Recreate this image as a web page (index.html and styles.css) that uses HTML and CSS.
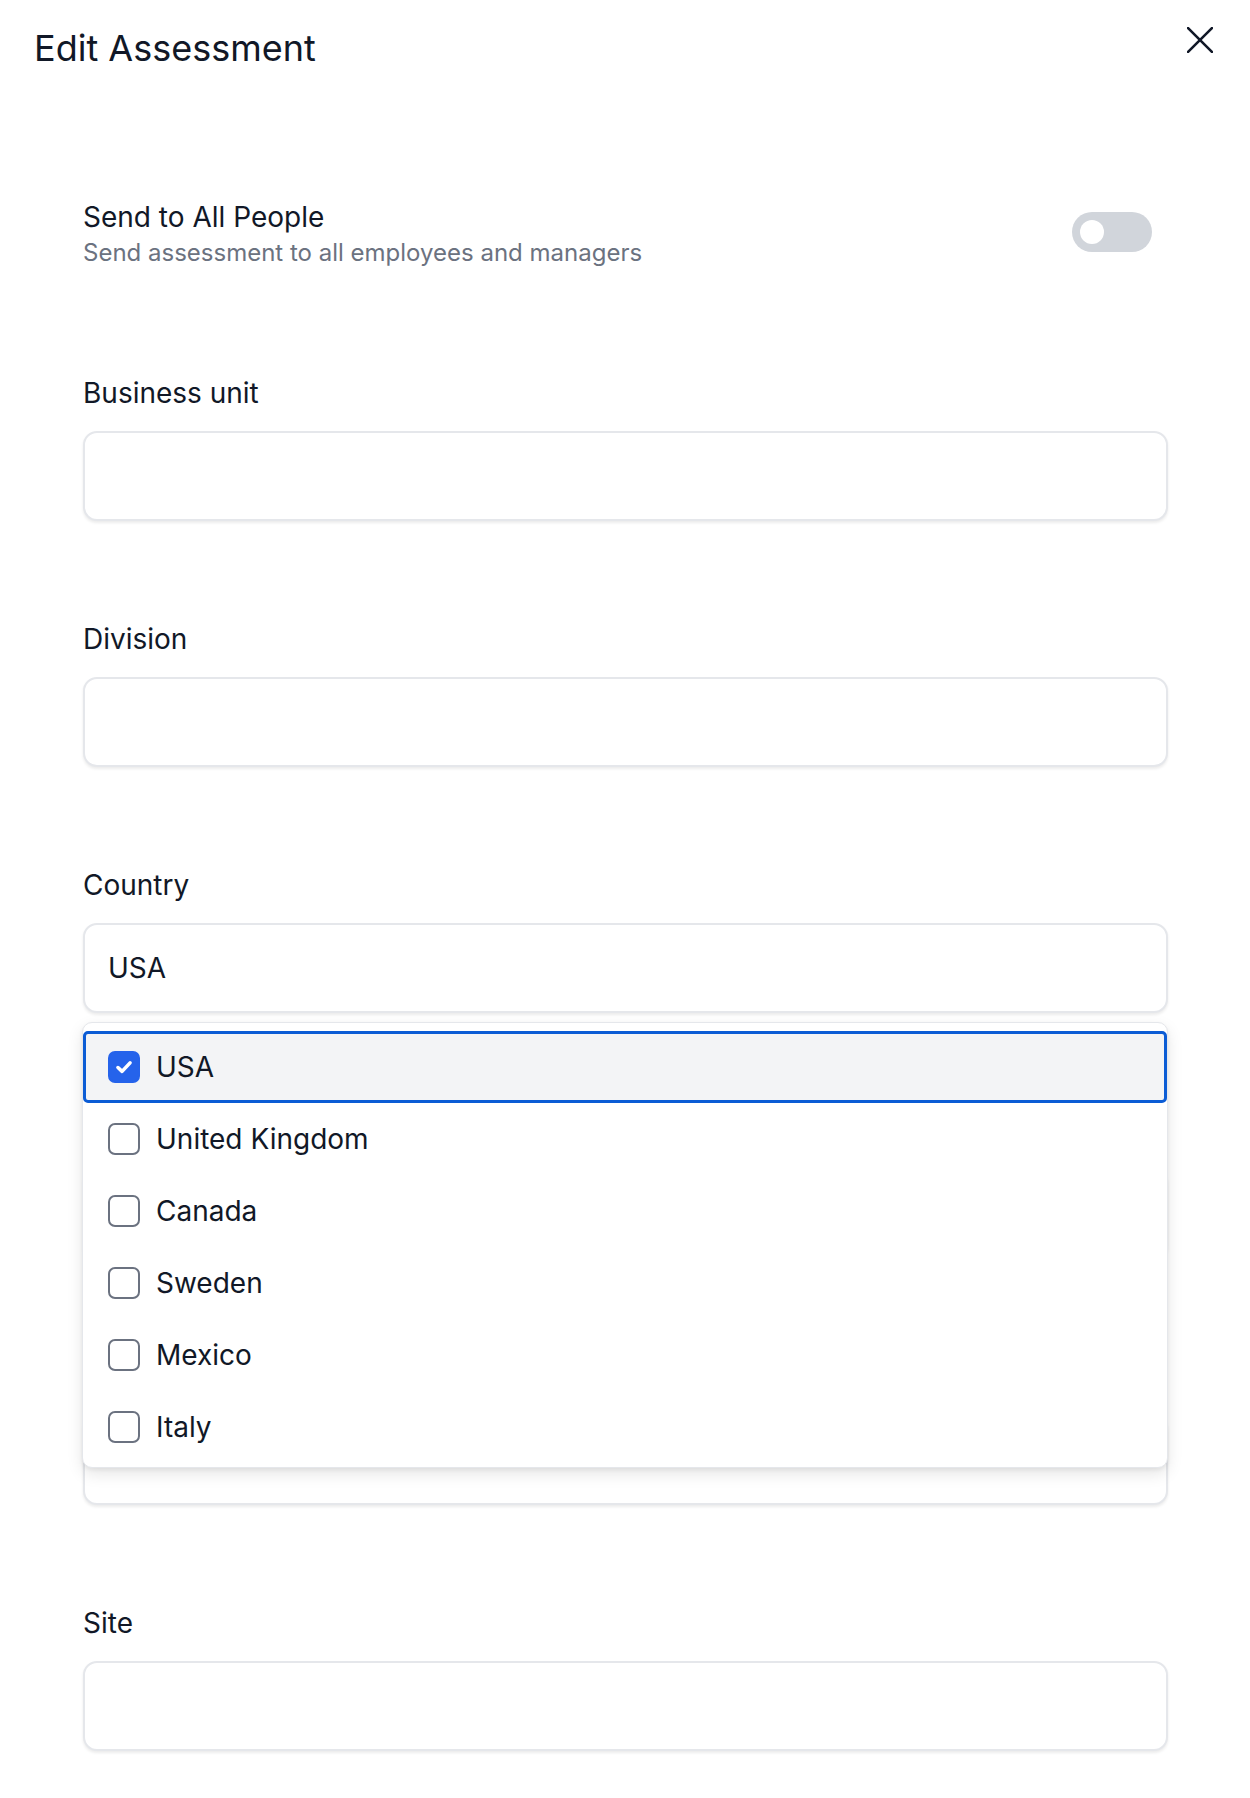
FILE: index.html
```html
<!DOCTYPE html>
<html lang="en">
<head>
<meta charset="utf-8">
<title>Edit Assessment</title>
<link rel="stylesheet" href="styles.css">
</head>
<body>
<div class="panel">
  <header class="header">
    <h1 class="title">Edit Assessment</h1>
    <button class="close" aria-label="Close">
      <svg viewBox="0 0 24 24" width="26" height="26"><path d="M1 1 L23 23 M23 1 L1 23" stroke="#111827" stroke-width="2.4" stroke-linecap="round" fill="none"/></svg>
    </button>
  </header>

  <div class="content">
    <div class="toggle-row">
      <div class="toggle-text">
        <div class="toggle-title">Send to All People</div>
        <div class="toggle-sub">Send assessment to all employees and managers</div>
      </div>
      <div class="switch"><span class="knob"></span></div>
    </div>

    <div class="field">
      <label class="label">Business unit</label>
      <div class="input"></div>
    </div>

    <div class="field">
      <label class="label">Division</label>
      <div class="input"></div>
    </div>

    <div class="field">
      <label class="label">Country</label>
      <div class="input-wrap">
        <div class="input"><span class="value">USA</span></div>
        <ul class="dropdown">
          <li class="option selected"><span class="cb checked"><svg viewBox="0 0 16 16" width="22" height="22"><path d="M3.6 8.4 L6.6 11.2 L12.4 5" stroke="#fff" stroke-width="2.6" stroke-linecap="round" stroke-linejoin="round" fill="none"/></svg></span>USA</li>
          <li class="option"><span class="cb"></span>United Kingdom</li>
          <li class="option"><span class="cb"></span>Canada</li>
          <li class="option"><span class="cb"></span>Sweden</li>
          <li class="option"><span class="cb"></span>Mexico</li>
          <li class="option"><span class="cb"></span>Italy</li>
        </ul>
      </div>
    </div>

    <div class="field">
      <label class="label covered">Region</label>
      <div class="input"></div>
    </div>

    <div class="field">
      <label class="label covered">Department</label>
      <div class="input"></div>
    </div>

    <div class="field">
      <label class="label">Site</label>
      <div class="input"></div>
    </div>
  </div>
</div>
</body>
</html>
```

FILE: styles.css
```css
* { box-sizing: border-box; }
html, body { margin: 0; padding: 0; background: #fff; }
body {
  font-family: Inter, "Noto Sans", "Liberation Sans", sans-serif;
  color: #111827;
}
.panel { width: 1250px; }

.header {
  display: flex;
  justify-content: space-between;
  align-items: flex-start;
  padding: 26px 37px 0 34px;
}
.title {
  margin: 0;
  font-size: 36px;
  line-height: 44px;
  font-weight: 400;
  color: #111827;
}
.close {
  margin-top: 1px;
  padding: 0;
  border: 0;
  background: none;
  width: 26px;
  height: 26px;
  display: flex;
}

.content {
  padding: 130px 82px 47px 83px;
  display: flex;
  flex-direction: column;
  gap: 100px;
}
.content .toggle-row { margin-bottom: 6px; }

.toggle-row {
  display: flex;
  align-items: center;
  justify-content: space-between;
  padding-right: 16px;
}
.toggle-title {
  font-size: 28px;
  line-height: 34px;
  color: #111827;
  margin-bottom: 3px;
}
.toggle-sub {
  font-size: 24px;
  line-height: 32px;
  color: #6b7280;
}
.switch {
  width: 80px;
  height: 40px;
  border-radius: 20px;
  background: #d1d5db;
  display: flex;
  align-items: center;
  padding-left: 8px;
  margin-bottom: 5px;
}
.knob {
  width: 24px;
  height: 24px;
  border-radius: 50%;
  background: #fff;
}

.field {
  display: flex;
  flex-direction: column;
  gap: 20px;
}
.label {
  font-size: 28px;
  line-height: 36px;
  color: #111827;
}
.label.covered { visibility: hidden; }
.input {
  height: 90px;
  border: 2px solid #e5e7eb;
  border-radius: 14px;
  background: #fff;
  box-shadow: 0 2px 3px rgba(0, 0, 0, 0.08);
  display: flex;
  align-items: center;
  padding-left: 23px;
}
.value {
  font-size: 28px;
  color: #111827;
}

.input-wrap { position: relative; }
.dropdown {
  position: absolute;
  left: -1px;
  right: 0;
  top: calc(100% + 9px);
  margin: 0;
  padding: 8px 0 4px;
  list-style: none;
  background: #fff;
  border: 1px solid #e5e7eb;
  border-radius: 10px;
  box-shadow: 0 6px 16px rgba(0, 0, 0, 0.10), 0 2px 4px rgba(0, 0, 0, 0.06);
  z-index: 10;
}
.option {
  height: 72px;
  display: flex;
  align-items: center;
  gap: 16px;
  padding-left: 25px;
  font-size: 28px;
  color: #111827;
}
.option.selected {
  background: #f3f4f6;
  border: 3px solid #0b5cd5;
  border-radius: 5px;
  padding-left: 22px;
}
.cb {
  width: 32px;
  height: 32px;
  border: 2px solid #6b7280;
  border-radius: 7px;
  background: #fff;
  flex: none;
  display: flex;
  align-items: center;
  justify-content: center;
}
.cb.checked {
  background: #2563eb;
  border-color: #2563eb;
}
```
